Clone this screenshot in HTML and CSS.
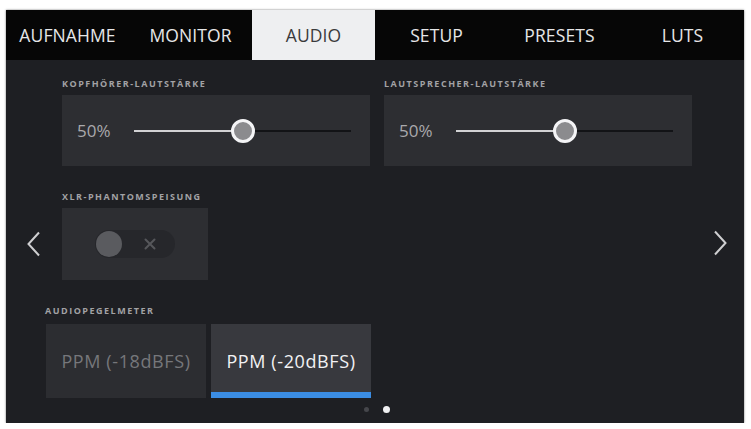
FILE: index.html
```html
<!DOCTYPE html>
<html lang="de">
<head>
<meta charset="utf-8">
<title>Audio</title>
<link rel="stylesheet" href="styles.css">
</head>
<body>
<div class="screen">
  <nav class="tabs">
    <div class="tab">AUFNAHME</div>
    <div class="tab">MONITOR</div>
    <div class="tab active">AUDIO</div>
    <div class="tab">SETUP</div>
    <div class="tab">PRESETS</div>
    <div class="tab">LUTS</div>
  </nav>
  <main class="content">
    <div class="row-sliders">
      <section class="group">
        <div class="label">Kopfhörer-Lautstärke</div>
        <div class="card slider-card">
          <span class="value">50%</span>
          <div class="track"><div class="fill"></div><div class="knob"></div></div>
        </div>
      </section>
      <section class="group">
        <div class="label">Lautsprecher-Lautstärke</div>
        <div class="card slider-card">
          <span class="value">50%</span>
          <div class="track"><div class="fill"></div><div class="knob"></div></div>
        </div>
      </section>
    </div>
    <section class="group xlr">
      <div class="label">XLR-Phantomspeisung</div>
      <div class="card toggle-card">
        <div class="toggle">
          <span class="toggle-dot"></span>
          <svg class="toggle-x" width="12" height="12" viewBox="0 0 12 12"><path d="M1.5 1.5 L10.5 10.5 M10.5 1.5 L1.5 10.5" stroke="#56575b" stroke-width="2" stroke-linecap="round"/></svg>
        </div>
      </div>
    </section>
    <section class="group meter">
      <div class="label">Audiopegelmeter</div>
      <div class="buttons">
        <div class="btn">PPM (-18dBFS)</div>
        <div class="btn selected">PPM (-20dBFS)</div>
      </div>
    </section>
    <div class="dots"><span class="dot"></span><span class="dot on"></span></div>
  </main>
  <svg class="chev chev-left" width="16" height="26" viewBox="0 0 16 26"><path d="M13 1.5 L2.5 13 L13 24.5" fill="none" stroke="#cfcfd1" stroke-width="2"/></svg>
  <svg class="chev chev-right" width="16" height="26" viewBox="0 0 16 26"><path d="M3 1.5 L13.5 13 L3 24.5" fill="none" stroke="#cfcfd1" stroke-width="2"/></svg>
</div>
</body>
</html>
```
FILE: styles.css
```css
html, body { margin: 0; padding: 0; background: #ffffff; }
body { font-family: "Open Sans", "DejaVu Sans", sans-serif; }

.screen {
  position: relative;
  margin: 10px 0 0 6px;
  width: 738px;
  height: 413px;
  background: #1e1f23;
  box-shadow: 0 0 2px rgba(0,0,0,0.55);
  overflow: hidden;
}

.tabs {
  display: grid;
  grid-template-columns: repeat(6, 1fr);
  height: 50px;
  background: #060606;
}
.tab {
  display: flex;
  align-items: center;
  justify-content: center;
  color: #e6e6e8;
  font-size: 17.5px;
  font-weight: 500;
  letter-spacing: 0.1px;
}
.tab.active { background: #eeeff1; color: #3a3a3c; }

.content { display: flex; flex-direction: column; padding-top: 18px; }

.label {
  font-size: 9px;
  line-height: 11px;
  font-weight: 700;
  letter-spacing: 1.5px;
  text-transform: uppercase;
  color: #a2a2a5;
  margin-bottom: 6px;
}

.card { background: #2d2e32; }

.row-sliders { display: flex; gap: 14px; padding-left: 56px; }
.slider-card {
  width: 308px;
  height: 71px;
  display: flex;
  align-items: center;
  padding-left: 15px;
  box-sizing: border-box;
}
.value {
  width: 57px;
  font-size: 17px;
  color: #a9a9ac;
  letter-spacing: 0;
}
.track {
  position: relative;
  width: 217px;
  height: 2px;
  background: #121316;
}
.fill { width: 109px; height: 2px; background: #d2d2d4; }
.knob {
  position: absolute;
  left: 109px;
  top: 1px;
  width: 18px;
  height: 18px;
  margin: -12px 0 0 -12px;
  border: 3px solid #f4f4f6;
  border-radius: 50%;
  background: #8b8b8e;
}

.xlr { margin: 25px 0 0 56px; }
.toggle-card {
  width: 146px;
  height: 72px;
  display: flex;
  align-items: center;
  justify-content: center;
}
.toggle {
  width: 80px;
  height: 28px;
  border-radius: 14px;
  background: #26272b;
  display: flex;
  align-items: center;
  padding-left: 1px;
  box-sizing: border-box;
}
.toggle-dot {
  width: 26px;
  height: 26px;
  border-radius: 50%;
  background: #5a5b5f;
}
.toggle-x { margin-left: 22px; }

.meter { margin: 25px 0 0 40px; }
.meter .label { margin-left: -1px; margin-bottom: 8px; }
.buttons { display: flex; gap: 5px; }
.btn {
  width: 160px;
  height: 74px;
  box-sizing: border-box;
  display: flex;
  align-items: center;
  justify-content: center;
  background: #2c2d31;
  color: #76777b;
  font-size: 18px;
  letter-spacing: 0.6px;
}
.btn.selected {
  background: #38393e;
  color: #f2f2f4;
  border-bottom: 6px solid #3b8de4;
  padding-top: 6px;
}

.dots { display: flex; justify-content: center; align-items: center; gap: 14px; margin-top: 8px; padding-left: 4px; }
.dot { width: 5px; height: 5px; border-radius: 50%; background: #45464b; }
.dot.on { width: 7px; height: 7px; background: #f0f0f2; }

.chev { position: absolute; }
.chev-left { left: 20px; top: 221px; }
.chev-right { left: 706px; top: 220px; }
```
